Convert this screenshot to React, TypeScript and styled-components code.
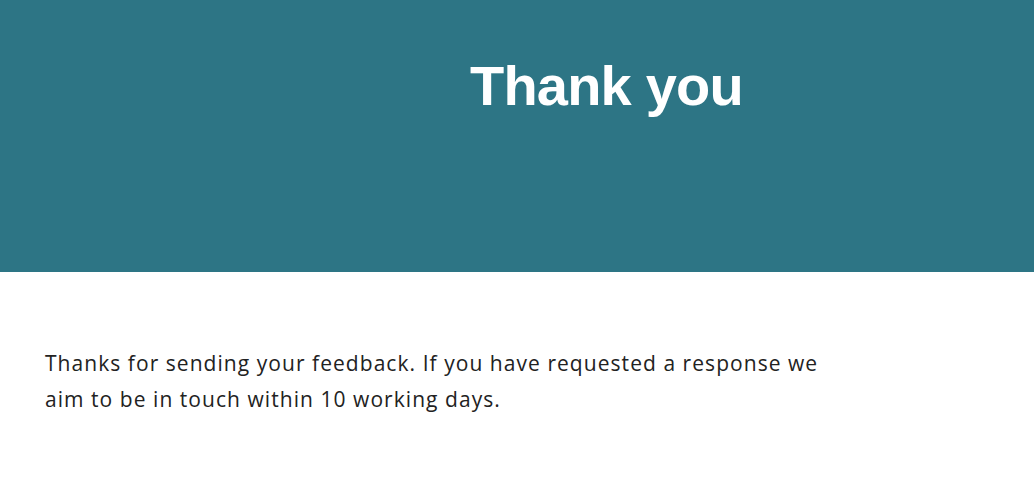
import styled, { createGlobalStyle } from 'styled-components'

const GlobalStyle = createGlobalStyle`
  html, body {
    margin: 0;
    padding: 0;
    background: #ffffff;
  }
`

const Page = styled.main`
  display: flex;
  flex-direction: column;
  width: 100%;
`

const Banner = styled.header`
  background-color: #2d7585;
  display: grid;
  grid-template-columns: 470px 1fr;
  height: 272px;
`

const Title = styled.h1`
  color: #ffffff;
  font-family: 'Liberation Sans', Arial, sans-serif;
  font-size: 56px;
  font-weight: 700;
  grid-column: 2;
  letter-spacing: -0.8px;
  line-height: 1;
  margin: 0;
  padding-top: 58px;
`

const Content = styled.section`
  padding: 73px 45px 0;
`

const Message = styled.p`
  color: #222222;
  font-family: 'Open Sans', sans-serif;
  font-size: 21px;
  font-weight: 400;
  letter-spacing: 1.05px;
  line-height: 36px;
  margin: 0;
  max-width: 800px;
`

const App = () => {
  return (
    <Page>
      <GlobalStyle />
      <Banner>
        <Title>Thank you</Title>
      </Banner>
      <Content>
        <Message>
          Thanks for sending your feedback. If you have requested a response we aim to be in
          touch within 10 working days.
        </Message>
      </Content>
    </Page>
  )
}

export default App
